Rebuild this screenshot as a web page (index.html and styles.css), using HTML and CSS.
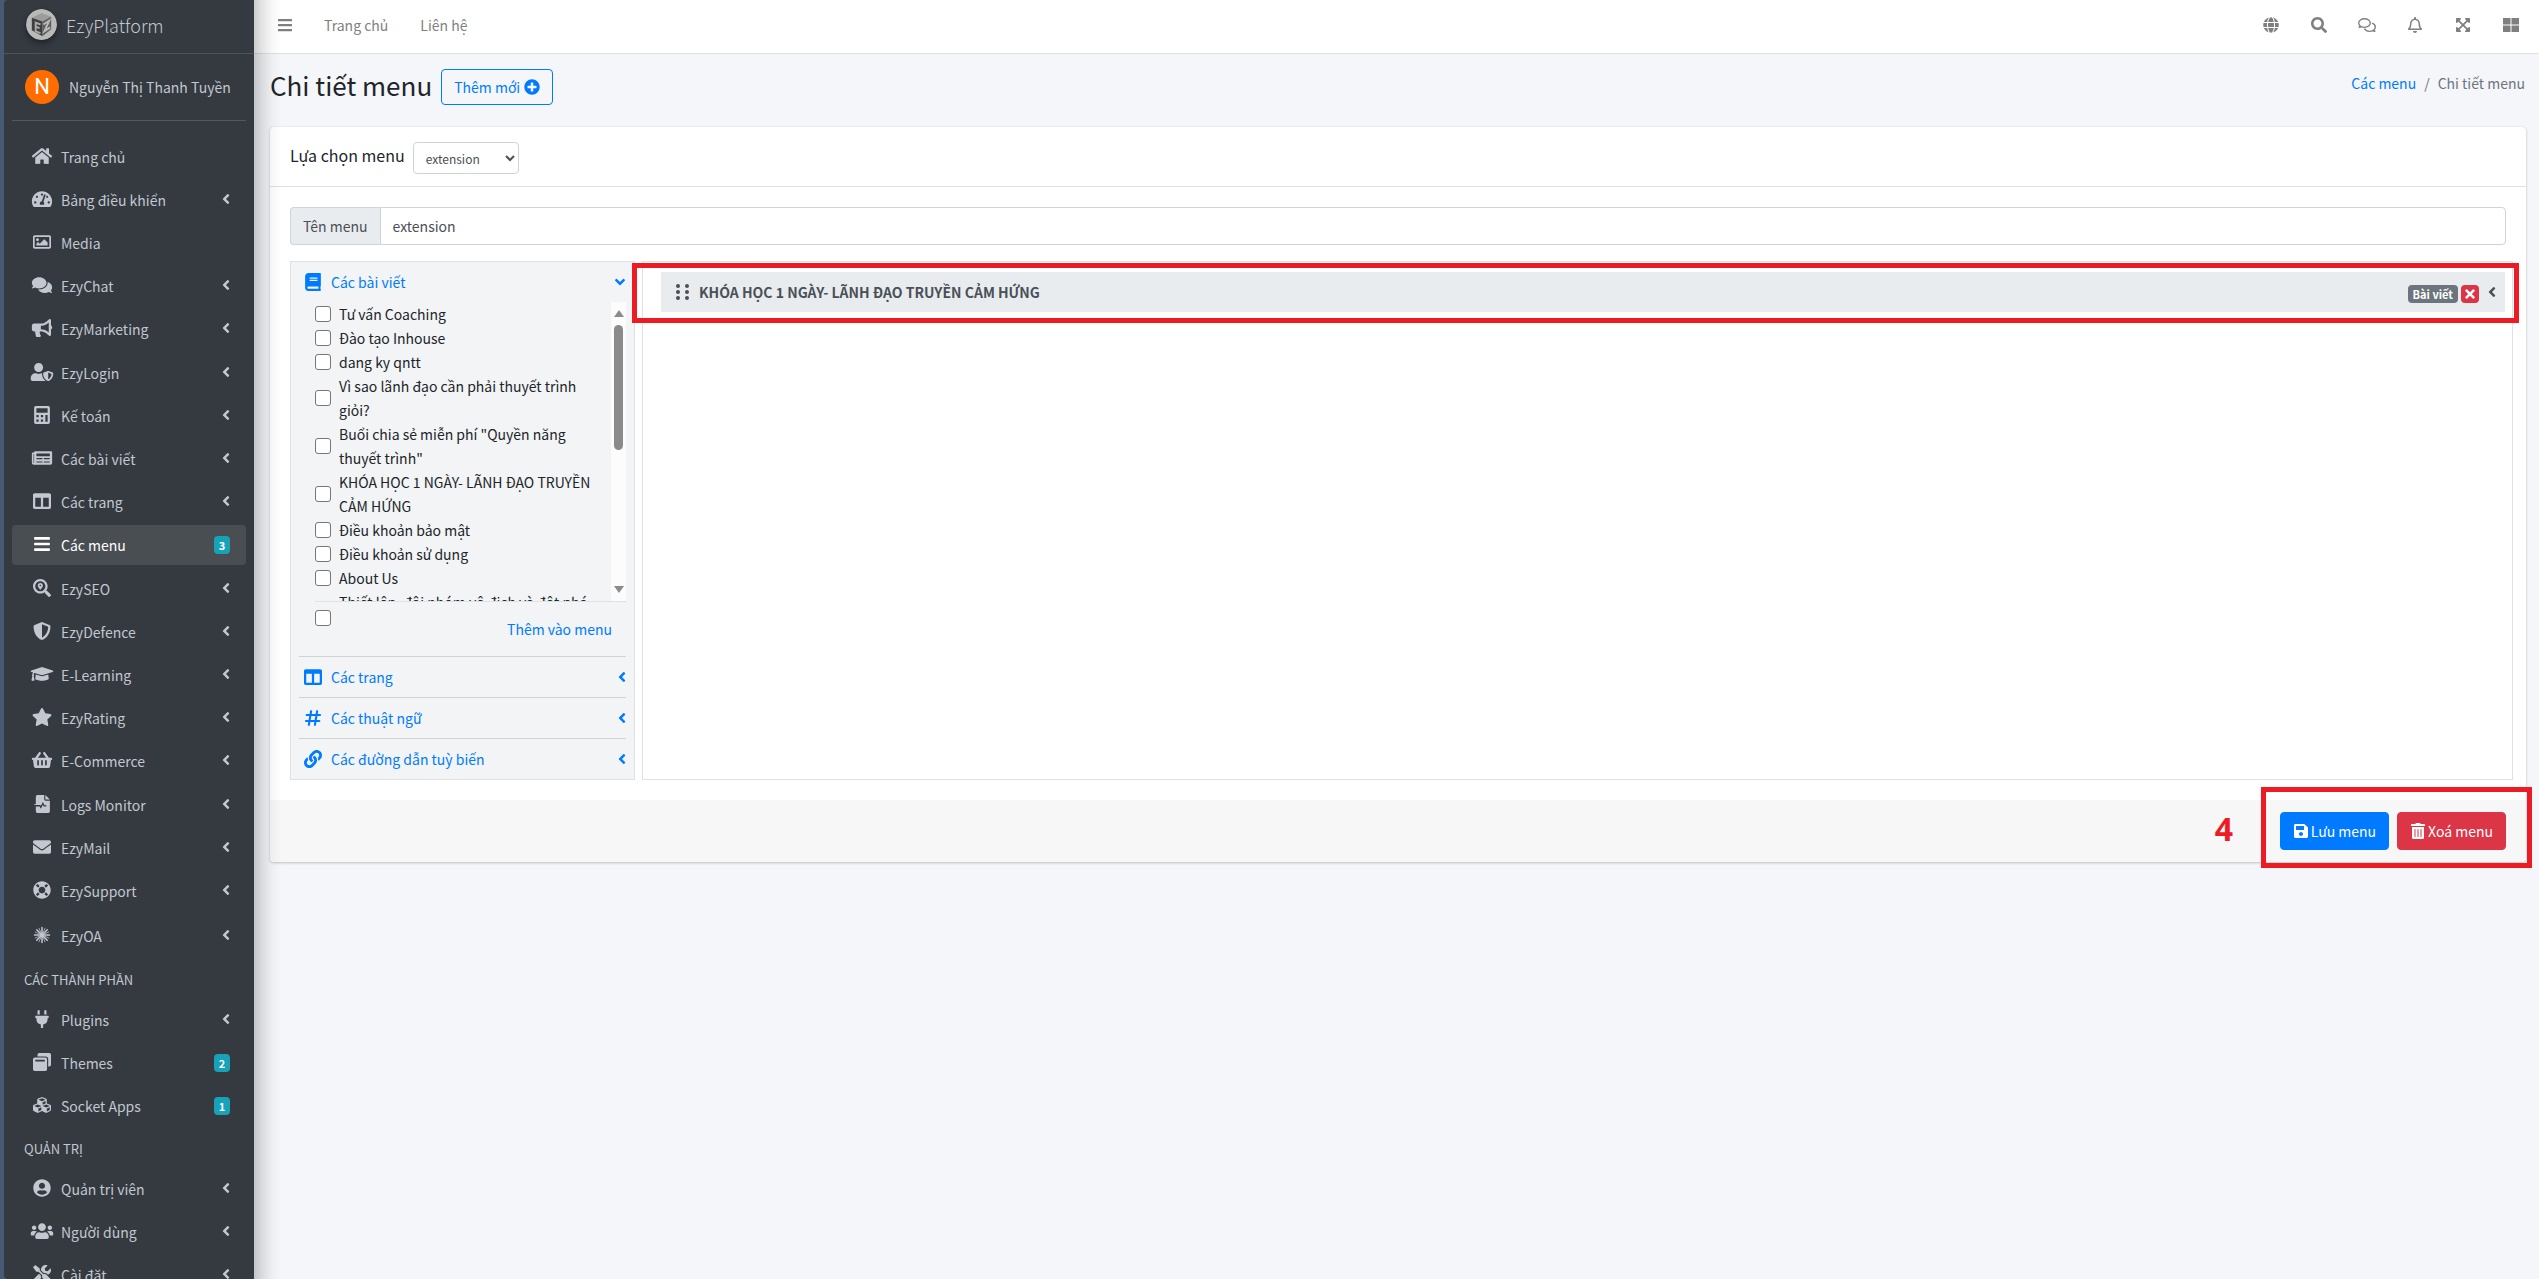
FILE: index.html
```html
<!DOCTYPE html>
<html lang="vi">
<head>
<meta charset="utf-8">
<meta name="viewport" content="width=device-width, initial-scale=1">
<title>EzyPlatform - Chi tiết menu</title>
<link rel="stylesheet" href="styles.css">
</head>
<body>
<svg class="sprite" aria-hidden="true">
<symbol id="i-home" viewBox="0 0 576 512"><path d="M280.37 148.26L96 300.11V464a16 16 0 0 0 16 16l112.06-.29a16 16 0 0 0 15.92-16V368a16 16 0 0 1 16-16h64a16 16 0 0 1 16 16v95.64a16 16 0 0 0 16 16.05L464 480a16 16 0 0 0 16-16V300L295.67 148.26a12.19 12.19 0 0 0-15.3 0zM571.6 251.47L488 182.56V44.05a12 12 0 0 0-12-12h-56a12 12 0 0 0-12 12v72.61L318.47 43a48 48 0 0 0-61 0L4.34 251.47a12 12 0 0 0-1.6 16.9l25.5 31A12 12 0 0 0 45.15 301l235.22-193.74a12.19 12.19 0 0 1 15.3 0L530.9 301a12 12 0 0 0 16.9-1.6l25.5-31a12 12 0 0 0-1.7-16.93z"/></symbol>
<symbol id="i-dashboard" viewBox="0 0 576 512"><path d="M288 32C128.94 32 0 160.94 0 320c0 52.8 14.25 102.26 39.06 144.8 5.61 9.62 16.3 15.2 27.44 15.2h443c11.14 0 21.83-5.58 27.44-15.2C561.75 422.26 576 372.8 576 320c0-159.06-128.94-288-288-288zm0 64c14.71 0 26.58 10.13 30.32 23.65-1.11 2.26-2.64 4.23-3.45 6.67l-9.22 27.67c-5.13 3.49-10.97 6.01-17.64 6.01-17.67 0-32-14.33-32-32S270.33 96 288 96zM96 384c-17.67 0-32-14.33-32-32s14.33-32 32-32 32 14.33 32 32-14.33 32-32 32zm48-160c-17.67 0-32-14.33-32-32s14.33-32 32-32 32 14.33 32 32-14.33 32-32 32zm246.77-72.41l-61.33 184C343.13 347.33 352 364.54 352 384c0 11.72-3.38 22.55-8.88 32H232.88c-5.5-9.45-8.88-20.28-8.88-32 0-33.94 26.5-61.43 59.9-63.59l61.34-184.01c4.17-12.56 17.73-19.45 30.36-15.17 12.57 4.19 19.35 17.79 15.17 30.36zm14.66 57.2l15.52-46.55c3.47-1.29 7.13-2.23 11.05-2.23 17.67 0 32 14.33 32 32s-14.33 32-32 32c-11.38-.01-20.89-6.28-26.57-15.22zM480 384c-17.67 0-32-14.33-32-32s14.33-32 32-32 32 14.33 32 32-14.33 32-32 32z"/></symbol>
<symbol id="i-image" viewBox="0 0 512 512"><path d="M464 64H48C21.49 64 0 85.49 0 112v288c0 26.51 21.49 48 48 48h416c26.51 0 48-21.49 48-48V112c0-26.51-21.49-48-48-48zm-6 336H54a6 6 0 0 1-6-6V118a6 6 0 0 1 6-6h404a6 6 0 0 1 6 6v276a6 6 0 0 1-6 6zM128 152c-22.091 0-40 17.909-40 40s17.909 40 40 40 40-17.909 40-40-17.909-40-40-40zM96 352h320v-80l-87.515-87.515c-4.686-4.686-12.284-4.686-16.971 0L192 304l-39.515-39.515c-4.686-4.686-12.284-4.686-16.971 0L96 304v48z"/></symbol>
<symbol id="i-comments" viewBox="0 0 576 512"><path d="M416 192c0-88.4-93.1-160-208-160S0 103.6 0 192c0 34.3 14.1 65.9 38 92-13.4 30.2-35.5 54.2-35.8 54.5-2.2 2.3-2.8 5.7-1.5 8.7S4.8 352 8 352c36.6 0 66.9-12.3 88.7-25 32.2 15.7 70.3 25 111.3 25 114.9 0 208-71.6 208-160zm122 220c23.9-26 38-57.7 38-92 0-66.9-53.5-124.2-129.3-148.1.9 6.6 1.3 13.3 1.3 20.1 0 105.9-107.7 192-240 192-10.8 0-21.3-.8-31.7-1.9C207.8 439.6 281.8 480 368 480c41 0 79.1-9.2 111.3-25 21.8 12.7 52.1 25 88.7 25 3.2 0 6.1-1.9 7.3-4.8 1.3-2.9.7-6.3-1.5-8.7-.3-.3-22.4-24.2-35.8-54.5z"/></symbol>
<symbol id="i-bullhorn" viewBox="0 0 576 512"><path d="M576 240c0-23.63-12.95-44.04-32-55.12V32.01C544 23.26 537.02 0 512 0c-7.12 0-14.19 2.38-19.98 7.02l-85.03 68.03C364.28 109.19 310.66 128 256 128H64c-35.35 0-64 28.65-64 64v96c0 35.35 28.65 64 64 64h33.7c-1.39 10.48-2.18 21.14-2.18 32 0 39.77 9.26 77.35 25.56 110.94 5.19 10.69 16.52 17.06 28.4 17.06h74.28c26.05 0 41.69-29.84 25.9-50.56-16.4-21.52-26.15-48.36-26.15-77.44 0-11.11 1.62-21.79 4.41-32H256c54.66 0 108.28 18.81 150.98 52.95l85.03 68.03a32.023 32.023 0 0 0 19.98 7.02c24.92 0 32-22.78 32-32V295.13C563.05 284.04 576 263.63 576 240zm-96 141.42l-33.05-26.44C392.95 311.78 325.12 288 256 288v-96c69.12 0 136.95-23.78 190.95-66.98L480 98.58v282.84z"/></symbol>
<symbol id="i-user-shield" viewBox="0 0 640 512"><path d="M622.3 271.1l-115.2-45c-4.1-1.6-12.6-3.7-22.2 0l-115.2 45c-10.7 4.2-17.7 14-17.7 24.9 0 111.6 68.7 188.8 132.9 213.9 9.6 3.7 18 1.6 22.2 0C558.4 489.9 640 420.5 640 296c0-10.9-7-20.7-17.7-24.9zM496 462.4V273.3l95.5 37.3c-5.6 87.1-60.9 135.4-95.5 151.8zM224 256c70.7 0 128-57.3 128-128S294.7 0 224 0 96 57.3 96 128s57.3 128 128 128zm96 40c0-2.5.8-4.8 1.1-7.2-2.5-.1-4.9-.8-7.5-.8h-16.7c-22.2 10.2-46.9 16-72.9 16s-50.6-5.8-72.9-16h-16.7C60.2 288 0 348.2 0 422.4V464c0 26.5 21.5 48 48 48h352c6.8 0 13.3-1.5 19.2-4-54-42.9-99.2-116.7-99.2-212z"/></symbol>
<symbol id="i-calculator" viewBox="0 0 448 512"><path fill-rule="evenodd" d="M400 0H48C22.4 0 0 22.4 0 48v416c0 25.600 22.400 48 48 48h352c25.600 0 48-22.400 48-48V48c0-25.600-22.400-48-48-48zM64 64h320v128H64zM64 256h64v64H64zM192 256h64v64h-64zM320 256h64v192h-64zM64 384h64v64H64zM192 384h64v64h-64z"/></symbol>
<symbol id="i-news" viewBox="0 0 576 512"><path fill-rule="evenodd" d="M552 64H88c-13.255 0-24 10.745-24 24v8H24c-13.255 0-24 10.745-24 24v272c0 30.928 25.072 56 56 56h472c26.510 0 48-21.490 48-48V88c0-13.255-10.745-24-24-24zM56 400a8 8 0 0 1-8-8V144h16v248a8 8 0 0 1-8 8zM140 128h360q12 0 12 12v56q0 12-12 12H140q-12 0-12-12v-56q0-12 12-12zM140 256h152q12 0 12 12v8q0 12-12 12H140q-12 0-12-12v-8q0-12 12-12zM348 256h152q12 0 12 12v8q0 12-12 12H348q-12 0-12-12v-8q0-12 12-12zM140 352h152q12 0 12 12v8q0 12-12 12H140q-12 0-12-12v-8q0-12 12-12zM348 352h152q12 0 12 12v8q0 12-12 12H348q-12 0-12-12v-8q0-12 12-12z"/></symbol>
<symbol id="i-columns" viewBox="0 0 512 512"><path d="M464 32H48C21.49 32 0 53.49 0 80v352c0 26.51 21.49 48 48 48h416c26.51 0 48-21.49 48-48V80c0-26.51-21.49-48-48-48zM224 416H64V160h160v256zm224 0H288V160h160v256z"/></symbol>
<symbol id="i-bars" viewBox="0 0 448 512"><path d="M16 60h416q16 0 16 16v40q0 16-16 16H16q-16 0-16-16V76q0-16 16-16zM16 220h416q16 0 16 16v40q0 16-16 16H16q-16 0-16-16v-40q0-16 16-16zM16 380h416q16 0 16 16v40q0 16-16 16H16q-16 0-16-16v-40q0-16 16-16z"/></symbol>
<symbol id="i-search-location" viewBox="0 0 512 512"><path d="M505.04 442.66l-99.71-99.69c-4.5-4.5-10.6-7-17-7h-16.3c27.6-35.3 44-79.69 44-127.99C416.03 93.09 322.92 0 208.02 0S0 93.09 0 207.98s93.11 207.98 208.02 207.98c48.3 0 92.71-16.4 128.01-44v16.3c0 6.4 2.5 12.5 7 17l99.71 99.69c9.4 9.4 24.6 9.4 33.9 0l28.3-28.3c9.4-9.4 9.4-24.59.1-33.99zm-297.02-90.7c-79.54 0-144-64.34-144-143.98 0-79.53 64.35-143.98 144-143.98 79.54 0 144 64.34 144 143.98 0 79.53-64.35 143.98-144 143.98zm.02-239.96c-40.78 0-73.84 33.05-73.84 73.83 0 32.96 48.26 93.05 66.75 114.86a9.24 9.24 0 0 0 14.18 0c18.49-21.81 66.75-81.89 66.75-114.86 0-40.78-33.06-73.83-73.84-73.83zm0 96c-13.26 0-24-10.75-24-24 0-13.26 10.75-24 24-24s24 10.74 24 24c0 13.25-10.75 24-24 24z"/></symbol>
<symbol id="i-search" viewBox="0 0 512 512"><path d="M505 442.7L405.3 343c-4.5-4.5-10.6-7-17-7H372c27.6-35.3 44-79.7 44-128C416 93.1 322.9 0 208 0S0 93.1 0 208s93.1 208 208 208c48.3 0 92.7-16.4 128-44v16.3c0 6.4 2.5 12.5 7 17l99.7 99.7c9.4 9.4 24.6 9.4 33.9 0l28.3-28.3c9.4-9.4 9.4-24.6.1-34zM208 336c-70.7 0-128-57.2-128-128 0-70.7 57.2-128 128-128 70.7 0 128 57.2 128 128 0 70.7-57.2 128-128 128z"/></symbol>
<symbol id="i-shield" viewBox="0 0 512 512"><path d="M466.5 83.7l-192-80a48.15 48.15 0 0 0-36.9 0l-192 80C27.7 91.1 16 108.6 16 128c0 198.5 114.5 335.7 221.5 380.3 11.8 4.9 25.1 4.9 36.9 0C360.1 472.6 496 349.3 496 128c0-19.4-11.7-36.9-29.5-44.3zM256.1 446.3l-.1-381 175.9 73.3c-3.3 151.4-82.1 261.1-175.8 307.7z"/></symbol>
<symbol id="i-graduation" viewBox="0 0 640 512"><path d="M622.34 153.2L343.4 67.5c-15.2-4.67-31.6-4.67-46.79 0L17.66 153.2c-23.54 7.23-23.54 38.36 0 45.59l48.63 14.94c-10.67 13.19-17.23 29.28-17.88 46.9C38.78 266.15 32 276.11 32 288c0 10.78 5.68 19.85 13.86 25.65L20.33 428.53C18.11 438.52 25.71 448 35.94 448h56.11c10.24 0 17.84-9.48 15.62-19.47L82.14 313.65C90.32 307.85 96 298.78 96 288c0-11.57-6.47-21.25-15.66-26.87.76-15.02 8.44-28.3 20.69-36.72L296.6 284.5c9.06 2.78 26.44 6.25 46.79 0l278.95-85.7c23.55-7.24 23.55-38.36 0-45.6zM352.79 315.09c-28.53 8.76-52.84 3.92-65.59 0l-145.02-44.55L128 384c0 35.35 85.96 64 192 64s192-28.65 192-64l-14.18-113.47-145.03 44.56z"/></symbol>
<symbol id="i-star" viewBox="0 0 576 512"><path d="M259.3 17.8L194 150.2 47.9 171.5c-26.2 3.8-36.7 36.1-17.7 54.6l105.7 103-25 145.5c-4.5 26.3 23.2 46 46.4 33.7L288 439.6l130.7 68.7c23.2 12.2 50.9-7.4 46.4-33.7l-25-145.5 105.7-103c19-18.5 8.5-50.8-17.7-54.6L382 150.2 316.7 17.8c-11.700-23.600-45.600-23.900-57.400 0z"/></symbol>
<symbol id="i-basket" viewBox="0 0 576 512"><path d="M576 216v16c0 13.255-10.745 24-24 24h-8l-26.113 182.788C514.509 462.435 494.257 480 470.37 480H105.63c-23.887 0-44.139-17.565-47.518-41.212L32 256h-8c-13.255 0-24-10.745-24-24v-16c0-13.255 10.745-24 24-24h67.341l106.78-146.821c10.395-14.292 30.407-17.453 44.701-7.058 14.293 10.395 17.453 30.408 7.058 44.701L170.477 192h235.046L326.12 82.821c-10.395-14.292-7.234-34.306 7.059-44.701 14.291-10.395 34.306-7.235 44.701 7.058L484.659 192H552c13.255 0 24 10.745 24 24zM312 392V280c0-13.255-10.745-24-24-24s-24 10.745-24 24v112c0 13.255 10.745 24 24 24s24-10.745 24-24zm112 0V280c0-13.255-10.745-24-24-24s-24 10.745-24 24v112c0 13.255 10.745 24 24 24s24-10.745 24-24zm-224 0V280c0-13.255-10.745-24-24-24s-24 10.745-24 24v112c0 13.255 10.745 24 24 24s24-10.745 24-24z"/></symbol>
<symbol id="i-file-wave" viewBox="0 0 448 512"><path fill-rule="evenodd" d="M96 0h192v128q0 32 32 32h128v304q0 48-48 48H96q-48 0-48-48V324h110l34 66 56-112 26 46h74v-36h-52l-48-86-56 112-16-30H0v-24h48V48Q48 0 96 0zM320 0l128 128H320z"/></symbol>
<symbol id="i-envelope" viewBox="0 0 512 512"><path d="M502.3 190.8c3.9-3.1 9.7-.2 9.7 4.7V400c0 26.5-21.5 48-48 48H48c-26.5 0-48-21.5-48-48V195.6c0-5 5.7-7.8 9.700-4.700 22.400 17.400 52.100 39.500 154.100 113.600 21.100 15.400 56.700 47.800 92.200 47.600 35.700.3 72-32.800 92.300-47.600 102-74.100 131.600-96.300 154-113.700zM256 320c23.200.4 56.600-29.200 73.400-41.400 132.700-96.300 142.800-104.700 173.400-128.700 5.800-4.500 9.200-11.500 9.200-18.900v-19c0-26.500-21.500-48-48-48H48c-26.500 0-48 21.500-48 48v19c0 7.400 3.400 14.300 9.200 18.900 30.600 23.900 40.700 32.400 173.400 128.700 16.800 12.200 50.200 41.800 73.400 41.400z"/></symbol>
<symbol id="i-life-ring" viewBox="0 0 512 512"><path d="M256 8C119.033 8 8 119.033 8 256s111.033 248 248 248 248-111.033 248-248S392.967 8 256 8zm173.696 119.559l-63.399 63.399c-10.987-18.559-26.67-34.252-45.255-45.255l63.399-63.399a218.396 218.396 0 0 1 45.255 45.255zM256 352c-53.019 0-96-42.981-96-96s42.981-96 96-96 96 42.981 96 96-42.981 96-96 96zM127.559 82.304l63.399 63.399c-18.559 10.987-34.252 26.67-45.255 45.255l-63.399-63.399a218.372 218.372 0 0 1 45.255-45.255zM82.304 384.441l63.399-63.399c10.987 18.559 26.67 34.252 45.255 45.255l-63.399 63.399a218.396 218.396 0 0 1-45.255-45.255zm302.137 45.255l-63.399-63.399c18.559-10.987 34.252-26.67 45.255-45.255l63.399 63.399a218.403 218.403 0 0 1-45.255 45.255z"/></symbol>
<symbol id="i-burst" viewBox="0 0 24 24"><g stroke="currentColor" stroke-width="2" stroke-linecap="round"><path d="M12 2v20M2 12h20M5 5l14 14M19 5L5 19"/></g><g stroke="currentColor" stroke-width="1" stroke-linecap="round"><path d="M8 3l8 18M16 3L8 21M3 8l18 8M21 8L3 16"/></g></symbol>
<symbol id="i-plug" viewBox="0 0 384 512"><path d="M320,32a32,32,0,0,0-64,0v96h64Zm48,128H16A16,16,0,0,0,0,176v32a16,16,0,0,0,16,16H32v32A160.07,160.07,0,0,0,160,412.8V512h64V412.8A160.07,160.07,0,0,0,352,256V224h16a16,16,0,0,0,16-16V176A16,16,0,0,0,368,160ZM128,32a32,32,0,0,0-64,0v96h64Z"/></symbol>
<symbol id="i-windows" viewBox="0 0 512 512"><path fill-rule="evenodd" d="M48 128h304q48 0 48 48v288q0 48-48 48H48q-48 0-48-48V176q0-48 48-48zM80 192q-16 0-16 16v16q0 16 16 16h240q16 0 16-16v-16q0-16-16-16zM128 96V48q0-48 48-48h288q48 0 48 48v288q0 48-48 48h-32V176q0-80-80-80z"/></symbol>
<symbol id="i-cubes" viewBox="0 0 512 512"><path d="M488.6 250.2L392 214V105.5c0-15-9.3-28.4-23.4-33.7l-100-37.5c-8.1-3.1-17.1-3.1-25.3 0l-100 37.5c-14.1 5.3-23.4 18.7-23.4 33.7V214l-96.6 36.2C9.3 255.5 0 268.9 0 283.9V394c0 13.6 7.7 26.1 19.9 32.2l100 50c10.1 5.1 22.1 5.1 32.2 0l103.900-52 103.900 52c10.100 5.100 22.100 5.100 32.200 0l100-50c12.200-6.100 19.900-18.600 19.900-32.200V283.900c0-15-9.300-28.400-23.400-33.700zM358 214.800l-85 31.900v-68.200l85-37v73.300zM154 104.100l102-38.200 102 38.200v.6l-102 41.400-102-41.400v-.6zm84 291.100l-85 42.500v-79.100l85-38.800v75.400zm0-112l-102 41.400-102-41.400v-.6l102-38.200 102 38.200v.6zm240 112l-85 42.500v-79.100l85-38.800v75.400zm0-112l-102 41.400-102-41.400v-.6l102-38.200 102 38.200v.6z"/></symbol>
<symbol id="i-user-circle" viewBox="0 0 496 512"><path d="M248 8C111 8 0 119 0 256s111 248 248 248 248-111 248-248S385 8 248 8zm0 96c48.6 0 88 39.4 88 88s-39.4 88-88 88-88-39.4-88-88 39.4-88 88-88zm0 344c-58.7 0-111.3-26.6-146.5-68.2 18.8-35.4 55.6-59.8 98.5-59.8 2.4 0 4.8.4 7.1 1.1 13 4.2 26.6 6.9 40.9 6.9 14.3 0 28-2.7 40.9-6.9 2.3-.7 4.7-1.1 7.1-1.1 42.9 0 79.7 24.4 98.5 59.8C359.3 421.4 306.7 448 248 448z"/></symbol>
<symbol id="i-users" viewBox="0 0 640 512"><path d="M96 224c35.3 0 64-28.7 64-64s-28.7-64-64-64-64 28.7-64 64 28.7 64 64 64zm448 0c35.3 0 64-28.7 64-64s-28.7-64-64-64-64 28.7-64 64 28.7 64 64 64zm32 32h-64c-17.6 0-33.5 7.1-45.1 18.6 40.3 22.1 68.9 62 75.1 109.4h66c17.7 0 32-14.3 32-32v-32c0-35.3-28.7-64-64-64zm-256 0c61.9 0 112-50.1 112-112S381.9 32 320 32 208 82.1 208 144s50.1 112 112 112zm76.8 32h-8.3c-20.8 10-43.9 16-68.5 16s-47.6-6-68.5-16h-8.3C179.6 288 128 339.6 128 403.2V432c0 26.5 21.5 48 48 48h288c26.5 0 48-21.5 48-48v-28.8c0-63.6-51.6-115.2-115.2-115.2zm-223.7-13.4C161.5 263.1 145.6 256 128 256H64c-35.3 0-64 28.7-64 64v32c0 17.7 14.3 32 32 32h65.9c6.3-47.4 34.9-87.3 75.2-109.4z"/></symbol>
<symbol id="i-tools" viewBox="0 0 512 512"><path d="M501.1 395.7L384 278.6c-23.1-23.1-57.6-27.6-85.4-13.9L192 158.1V96L64 0 0 64l96 128h62.1l106.6 106.6c-13.6 27.8-9.2 62.3 13.9 85.4l117.1 117.1c14.6 14.6 38.2 14.6 52.7 0l52.7-52.7c14.5-14.6 14.5-38.2 0-52.7zM331.7 225c28.3 0 54.9 11 74.9 31l19.4 19.4c15.8-6.9 30.8-16.5 43.8-29.5 37.1-37.1 49.7-89.3 37.9-136.7-2.2-9-13.5-12.1-20.1-5.5l-74.4 74.4-67.9-11.3L334 98.900l74.400-74.400c6.600-6.600 3.400-17.900-5.700-20.200-47.400-11.700-99.600.9-136.600 37.900-28.500 28.500-41.900 66.100-41.200 103.600l82.100 82.100c8.100-1.900 16.500-2.900 24.700-2.900zm-103.900 82l-56.700-56.700L18.700 402.800c-25 25-25 65.500 0 90.500s65.500 25 90.500 0l123.600-123.600c-7.600-19.900-9.900-41.600-5-62.700zM64 472c-13.200 0-24-10.800-24-24 0-13.300 10.700-24 24-24s24 10.700 24 24c0 13.200-10.700 24-24 24z"/></symbol>
<symbol id="i-angle" viewBox="0 0 256 512"><path d="M31.7 239l136-136c9.4-9.4 24.6-9.4 33.9 0l22.6 22.6c9.4 9.4 9.4 24.6 0 33.9L127.9 256l96.4 96.4c9.4 9.4 9.4 24.6 0 33.9L201.7 409c-9.4 9.4-24.6 9.4-33.9 0l-136-136c-9.5-9.4-9.5-24.6-.1-34z"/></symbol>
<symbol id="i-book" viewBox="0 0 448 512"><path d="M448 360V24c0-13.3-10.7-24-24-24H96C43 0 0 43 0 96v320c0 53 43 96 96 96h328c13.3 0 24-10.7 24-24v-16c0-7.5-3.5-14.3-8.9-18.7-4.2-15.4-4.2-59.3 0-74.7 5.4-4.3 8.9-11.1 8.9-18.6zM128 134c0-3.3 2.7-6 6-6h212c3.3 0 6 2.700 6 6v20c0 3.300-2.700 6-6 6H134c-3.300 0-6-2.700-6-6v-20zm0 64c0-3.300 2.700-6 6-6h212c3.300 0 6 2.700 6 6v20c0 3.300-2.700 6-6 6H134c-3.300 0-6-2.700-6-6v-20zm253.400 250H96c-17.700 0-32-14.300-32-32 0-17.600 14.400-32 32-32h285.400c-1.900 17.100-1.900 46.900 0 64z"/></symbol>
<symbol id="i-hash" viewBox="0 0 448 512"><path fill="none" stroke="currentColor" stroke-width="60" stroke-linecap="round" d="M170 62l-64 388M342 62l-64 388M44 172h380M24 340h380"/></symbol>
<symbol id="i-link" viewBox="0 0 512 512"><path d="M326.612 185.391c59.747 59.809 58.927 155.698.36 214.59-.11.12-.24.25-.36.37l-67.2 67.2c-59.27 59.27-155.699 59.262-214.96 0-59.27-59.26-59.27-155.7 0-214.96l37.106-37.106c9.84-9.84 26.786-3.3 27.294 10.606.648 17.722 3.826 35.527 9.69 52.721 1.986 5.822.567 12.262-3.783 16.612l-13.087 13.087c-28.026 28.026-28.905 73.66-1.155 101.96 28.024 28.579 74.086 28.749 102.325.51l67.2-67.19c28.191-28.191 28.073-73.757 0-101.83-3.701-3.694-7.429-6.564-10.341-8.569a16.037 16.037 0 0 1-6.947-12.606c-.396-10.567 3.348-21.456 11.698-29.806l21.054-21.055c5.521-5.521 14.182-6.199 20.584-1.731a152.482 152.482 0 0 1 20.522 17.197zM467.547 44.449c-59.261-59.262-155.69-59.27-214.96 0l-67.2 67.2c-.12.12-.25.25-.36.37-58.566 58.892-59.387 154.781.36 214.59a152.454 152.454 0 0 0 20.521 17.196c6.402 4.468 15.064 3.789 20.584-1.731l21.054-21.055c8.35-8.35 12.094-19.239 11.698-29.806a16.037 16.037 0 0 0-6.947-12.606c-2.912-2.005-6.64-4.875-10.341-8.569-28.073-28.073-28.191-73.639 0-101.83l67.2-67.19c28.239-28.239 74.3-28.069 102.325.51 27.75 28.3 26.872 73.934-1.155 101.96l-13.087 13.087c-4.35 4.35-5.769 10.79-3.783 16.612 5.864 17.194 9.042 34.999 9.69 52.721.509 13.906 17.454 20.446 27.294 10.606l37.106-37.106c59.271-59.259 59.271-155.699.001-214.959z"/></symbol>
<symbol id="i-plus-circle" viewBox="0 0 512 512"><path fill-rule="evenodd" d="M256 8a248 248 0 1 0 0 496a248 248 0 1 0 0-496zM228 112h56q12 0 12 12v92h92q12 0 12 12v56q0 12-12 12h-92v92q0 12-12 12h-56q-12 0-12-12v-92h-92q-12 0-12-12v-56q0-12 12-12h92v-92q0-12 12-12z"/></symbol>
<symbol id="i-save" viewBox="0 0 448 512"><path d="M433.941 129.941l-83.882-83.882A48 48 0 0 0 316.118 32H48C21.490 32 0 53.490 0 80v352c0 26.510 21.490 48 48 48h352c26.510 0 48-21.490 48-48V163.882a48 48 0 0 0-14.059-33.941zM224 416c-35.346 0-64-28.654-64-64 0-35.346 28.654-64 64-64s64 28.654 64 64c0 35.346-28.654 64-64 64zm96-304.520V212c0 6.627-5.373 12-12 12H76c-6.627 0-12-5.373-12-12V108c0-6.627 5.373-12 12-12h228.520c3.183 0 6.235 1.264 8.485 3.515l3.480 3.480A11.996 11.996 0 0 1 320 111.480z"/></symbol>
<symbol id="i-trash" viewBox="0 0 448 512"><path d="M32 464a48 48 0 0 0 48 48h288a48 48 0 0 0 48-48V128H32zm272-256a16 16 0 0 1 32 0v224a16 16 0 0 1-32 0zm-96 0a16 16 0 0 1 32 0v224a16 16 0 0 1-32 0zm-96 0a16 16 0 0 1 32 0v224a16 16 0 0 1-32 0zM432 32H312l-9.400-18.700A24 24 0 0 0 281.100 0H166.800a23.720 23.720 0 0 0-21.400 13.300L136 32H16A16 16 0 0 0 0 48v32a16 16 0 0 0 16 16h416a16 16 0 0 0 16-16V48a16 16 0 0 0-16-16z"/></symbol>
<symbol id="i-times" viewBox="0 0 352 512"><path d="M242.72 256l100.07-100.07c12.28-12.28 12.28-32.19 0-44.48l-22.24-22.24c-12.28-12.28-32.19-12.28-44.48 0L176 189.28 75.93 89.21c-12.28-12.28-32.19-12.28-44.48 0L9.21 111.45c-12.28 12.28-12.28 32.19 0 44.48L109.28 256 9.21 356.07c-12.28 12.28-12.28 32.19 0 44.48l22.24 22.24c12.28 12.28 32.2 12.28 44.48 0L176 322.72l100.07 100.07c12.28 12.28 32.2 12.28 44.48 0l22.24-22.24c12.28-12.28 12.28-32.19 0-44.48L242.72 256z"/></symbol>
<symbol id="i-globe" viewBox="0 0 496 512"><path d="M336.5 160C322 70.7 287.8 8 248 8s-74 62.7-88.5 152h177zM152 256c0 22.2 1.2 43.5 3.3 64h185.3c2.1-20.5 3.3-41.8 3.3-64s-1.2-43.5-3.3-64H155.3c-2.1 20.5-3.3 41.8-3.3 64zm324.7-96c-28.6-67.9-86.5-120.4-158-141.6 24.4 33.8 41.2 84.7 50 141.6h108zM177.2 18.4C105.8 39.6 47.8 92.1 19.3 160h108c8.7-56.9 25.5-107.8 49.9-141.6zM487.4 192H372.7c2.1 21 3.3 42.5 3.3 64s-1.2 43-3.3 64h114.6c5.5-20.5 8.6-41.8 8.6-64s-3.1-43.5-8.5-64zM120 256c0-21.5 1.2-43 3.3-64H8.6C3.2 212.5 0 233.8 0 256s3.2 43.5 8.6 64h114.6c-2-21-3.2-42.5-3.2-64zm39.5 96c14.5 89.3 48.7 152 88.5 152s74-62.7 88.5-152h-177zm159.3 141.6c71.4-21.2 129.4-73.7 158-141.6h-108c-8.8 56.9-25.6 107.8-50 141.6zM19.3 352c28.6 67.9 86.5 120.4 158 141.6-24.4-33.8-41.2-84.7-50-141.6h-108z"/></symbol>
<symbol id="i-comments-o" viewBox="0 0 576 512"><g fill="none" stroke="currentColor" stroke-width="44" stroke-linejoin="round"><path d="M208 54C105 54 22 116 22 192c0 36 18 68 46 92-8 18-20 34-32 46 26-2 48-12 66-24 31 16 67 24 106 24 103 0 186-62 186-138S311 54 208 54z"/><path d="M448 194c62 20 106 68 106 126 0 36-18 68-46 92 8 18 20 34 32 46-26-2-48-12-66-24-31 16-67 24-106 24-76 0-132-32-162-84"/></g></symbol>
<symbol id="i-bell" viewBox="0 0 448 512"><path d="M439.39 362.29c-19.32-20.76-55.47-51.99-55.47-154.29 0-77.7-54.48-139.9-127.94-155.16V32c0-17.67-14.32-32-31.98-32s-31.98 14.33-31.98 32v20.84C118.56 68.1 64.08 130.3 64.08 208c0 102.3-36.15 133.53-55.47 154.29-6 6.45-8.66 14.16-8.61 21.71.11 16.4 12.98 32 32.1 32h383.8c19.12 0 32-15.6 32.1-32 .05-7.55-2.61-15.27-8.61-21.71zM67.53 368c21.22-27.97 44.42-74.33 44.53-159.42 0-.2-.06-.38-.06-.58 0-61.86 50.14-112 112-112s112 50.14 112 112c0 .2-.06.38-.06.58.11 85.1 23.31 131.46 44.53 159.42H67.53zM224 512c35.32 0 63.97-28.65 63.97-64H160.03c0 35.35 28.65 64 63.97 64z"/></symbol>
<symbol id="i-expand" viewBox="0 0 448 512"><path d="M448 344v112a23.94 23.94 0 0 1-24 24H312c-21.39 0-32.09-25.9-17-41l36.2-36.2L224 295.6 116.77 402.9 153 439c15.09 15.1 4.39 41-17 41H24a23.94 23.94 0 0 1-24-24V344c0-21.4 25.89-32.1 41-17l36.19 36.2L184.46 256 77.18 148.7 41 185c-15.1 15.1-41 4.4-41-17V56a23.94 23.94 0 0 1 24-24h112c21.39 0 32.09 25.9 17 41l-36.2 36.2L224 216.4l107.23-107.3L295 73c-15.09-15.1-4.39-41 17-41h112a23.94 23.94 0 0 1 24 24v112c0 21.4-25.89 32.1-41 17l-36.19-36.2L263.54 256l107.28 107.3L407 327.1c15.1-15.2 41-4.5 41 16.9z"/></symbol>
<symbol id="i-grid" viewBox="0 0 512 512"><path d="M0 32h240v208H0zM272 32h240v208H272zM0 272h240v208H0zM272 272h240v208H272z"/></symbol>
<symbol id="i-grip" viewBox="0 0 16 16"><circle cx="3" cy="2" r="2"/><circle cx="3" cy="8" r="2"/><circle cx="3" cy="14" r="2"/><circle cx="12" cy="2" r="2"/><circle cx="12" cy="8" r="2"/><circle cx="12" cy="14" r="2"/></symbol>
</svg>

<aside class="sidebar">
  <a class="brand" href="#">
    <svg class="brand-logo" viewBox="0 0 32 32" aria-hidden="true">
      <circle cx="16" cy="16" r="16" fill="#b9b9b9"/>
      <path d="M16 4l10 4-9 5-11-4z" fill="#9c9c9c"/>
      <path d="M6 9l11 4v15l-11-6z" fill="#3f3f3f"/>
      <path d="M26 8l-9 5v15l9-7z" fill="#5f5f5f"/>
      <path d="M15 16l-5-2v9l5 2M10 18l4 2" fill="none" stroke="#a8a8a8" stroke-width="2"/>
      <path d="M18 16l6-4-5 11 6-4" fill="none" stroke="#b9b9b9" stroke-width="2"/>
    </svg>
    <span>EzyPlatform</span>
  </a>
  <a class="user" href="#"><span class="avatar">N</span><span>Nguyễn Thị Thanh Tuyền</span></a>
  <nav>
    <ul class="side-nav">
      <li><a href="#"><svg class="ico"><use href="#i-home"/></svg><span>Trang chủ</span></a></li>
      <li><a href="#"><svg class="ico"><use href="#i-dashboard"/></svg><span>Bảng điều khiển</span><svg class="angle"><use href="#i-angle"/></svg></a></li>
      <li><a href="#"><svg class="ico"><use href="#i-image"/></svg><span>Media</span></a></li>
      <li><a href="#"><svg class="ico"><use href="#i-comments"/></svg><span>EzyChat</span><svg class="angle"><use href="#i-angle"/></svg></a></li>
      <li><a href="#"><svg class="ico"><use href="#i-bullhorn"/></svg><span>EzyMarketing</span><svg class="angle"><use href="#i-angle"/></svg></a></li>
      <li><a href="#"><svg class="ico"><use href="#i-user-shield"/></svg><span>EzyLogin</span><svg class="angle"><use href="#i-angle"/></svg></a></li>
      <li><a href="#"><svg class="ico"><use href="#i-calculator"/></svg><span>Kế toán</span><svg class="angle"><use href="#i-angle"/></svg></a></li>
      <li><a href="#"><svg class="ico"><use href="#i-news"/></svg><span>Các bài viết</span><svg class="angle"><use href="#i-angle"/></svg></a></li>
      <li><a href="#"><svg class="ico"><use href="#i-columns"/></svg><span>Các trang</span><svg class="angle"><use href="#i-angle"/></svg></a></li>
      <li><a class="active" href="#"><svg class="ico"><use href="#i-bars"/></svg><span>Các menu</span><span class="badge info">3</span></a></li>
      <li><a href="#"><svg class="ico"><use href="#i-search-location"/></svg><span>EzySEO</span><svg class="angle"><use href="#i-angle"/></svg></a></li>
      <li><a href="#"><svg class="ico"><use href="#i-shield"/></svg><span>EzyDefence</span><svg class="angle"><use href="#i-angle"/></svg></a></li>
      <li><a href="#"><svg class="ico"><use href="#i-graduation"/></svg><span>E-Learning</span><svg class="angle"><use href="#i-angle"/></svg></a></li>
      <li><a href="#"><svg class="ico"><use href="#i-star"/></svg><span>EzyRating</span><svg class="angle"><use href="#i-angle"/></svg></a></li>
      <li><a href="#"><svg class="ico"><use href="#i-basket"/></svg><span>E-Commerce</span><svg class="angle"><use href="#i-angle"/></svg></a></li>
      <li><a href="#"><svg class="ico"><use href="#i-file-wave"/></svg><span>Logs Monitor</span><svg class="angle"><use href="#i-angle"/></svg></a></li>
      <li><a href="#"><svg class="ico"><use href="#i-envelope"/></svg><span>EzyMail</span><svg class="angle"><use href="#i-angle"/></svg></a></li>
      <li><a href="#"><svg class="ico"><use href="#i-life-ring"/></svg><span>EzySupport</span><svg class="angle"><use href="#i-angle"/></svg></a></li>
      <li><a class="tall" href="#"><svg class="ico"><use href="#i-burst"/></svg><span>EzyOA</span><svg class="angle"><use href="#i-angle"/></svg></a></li>
    </ul>
    <h2 class="nav-header">CÁC THÀNH PHẦN</h2>
    <ul class="side-nav">
      <li><a href="#"><svg class="ico"><use href="#i-plug"/></svg><span>Plugins</span><svg class="angle"><use href="#i-angle"/></svg></a></li>
      <li><a href="#"><svg class="ico"><use href="#i-windows"/></svg><span>Themes</span><span class="badge info">2</span></a></li>
      <li><a href="#"><svg class="ico"><use href="#i-cubes"/></svg><span>Socket Apps</span><span class="badge info">1</span></a></li>
    </ul>
    <h2 class="nav-header">QUẢN TRỊ</h2>
    <ul class="side-nav">
      <li><a href="#"><svg class="ico"><use href="#i-user-circle"/></svg><span>Quản trị viên</span><svg class="angle"><use href="#i-angle"/></svg></a></li>
      <li><a href="#"><svg class="ico"><use href="#i-users"/></svg><span>Người dùng</span><svg class="angle"><use href="#i-angle"/></svg></a></li>
      <li><a href="#"><svg class="ico"><use href="#i-tools"/></svg><span>Cài đặt</span><svg class="angle"><use href="#i-angle"/></svg></a></li>
    </ul>
  </nav>
</aside>

<div class="page">
  <header class="topbar">
    <button class="icon-btn" type="button" aria-label="Thu gọn"><svg class="ico"><use href="#i-bars"/></svg></button>
    <a href="#">Trang chủ</a>
    <a href="#">Liên hệ</a>
    <div class="tools">
      <button class="icon-btn" type="button" aria-label="Ngôn ngữ"><svg class="ico"><use href="#i-globe"/></svg></button>
      <button class="icon-btn" type="button" aria-label="Tìm kiếm"><svg class="ico"><use href="#i-search"/></svg></button>
      <button class="icon-btn" type="button" aria-label="Tin nhắn"><svg class="ico"><use href="#i-comments-o"/></svg></button>
      <button class="icon-btn" type="button" aria-label="Thông báo"><svg class="ico"><use href="#i-bell"/></svg></button>
      <button class="icon-btn" type="button" aria-label="Toàn màn hình"><svg class="ico"><use href="#i-expand"/></svg></button>
      <button class="icon-btn" type="button" aria-label="Tuỳ chỉnh"><svg class="ico"><use href="#i-grid"/></svg></button>
    </div>
  </header>

  <main>
    <div class="page-head">
      <h1>Chi tiết menu</h1>
      <button class="btn outline" type="button">Thêm mới<svg class="ico"><use href="#i-plus-circle"/></svg></button>
      <nav class="crumbs" aria-label="Breadcrumb"><a href="#">Các menu</a><span>/</span><span>Chi tiết menu</span></nav>
    </div>

    <section class="card">
      <div class="card-head">
        <label for="menu-select">Lựa chọn menu</label>
        <select id="menu-select"><option>extension</option></select>
      </div>
      <div class="card-body">
        <div class="input-group">
          <label for="menu-name">Tên menu</label>
          <input id="menu-name" type="text" value="extension">
        </div>
        <div class="columns">
          <div class="sources">
            <section class="source">
              <a class="source-head open" href="#"><svg class="ico"><use href="#i-book"/></svg><span>Các bài viết</span><svg class="angle"><use href="#i-angle"/></svg></a>
              <div class="picker">
                <div class="picker-list">
                  <ul>
                    <li><label><input type="checkbox"><span>Tư vấn Coaching</span></label></li>
                    <li><label><input type="checkbox"><span>Đào tạo Inhouse</span></label></li>
                    <li><label><input type="checkbox"><span>dang ky qntt</span></label></li>
                    <li><label><input type="checkbox"><span>Vì sao lãnh đạo cần phải thuyết trình giỏi?</span></label></li>
                    <li><label><input type="checkbox"><span>Buổi chia sẻ miễn phí "Quyền năng thuyết trình"</span></label></li>
                    <li><label><input type="checkbox"><span>KHÓA HỌC 1 NGÀY- LÃNH ĐẠO TRUYỀN CẢM HỨNG</span></label></li>
                    <li><label><input type="checkbox"><span>Điều khoản bảo mật</span></label></li>
                    <li><label><input type="checkbox"><span>Điều khoản sử dụng</span></label></li>
                    <li><label><input type="checkbox"><span>About Us</span></label></li>
                    <li><label><input type="checkbox"><span>Thiết lập, đội nhóm vô địch và đột phá doanh số</span></label></li>
                  </ul>
                  <div class="rail" aria-hidden="true"><i class="up"></i><i class="thumb"></i><i class="down"></i></div>
                </div>
                <div class="picker-foot">
                  <input type="checkbox" aria-label="Chọn tất cả">
                  <a href="#">Thêm vào menu</a>
                </div>
              </div>
            </section>
            <a class="source-head" href="#"><svg class="ico"><use href="#i-columns"/></svg><span>Các trang</span><svg class="angle"><use href="#i-angle"/></svg></a>
            <a class="source-head" href="#"><svg class="ico"><use href="#i-hash"/></svg><span>Các thuật ngữ</span><svg class="angle"><use href="#i-angle"/></svg></a>
            <a class="source-head" href="#"><svg class="ico"><use href="#i-link"/></svg><span>Các đường dẫn tuỳ biến</span><svg class="angle"><use href="#i-angle"/></svg></a>
          </div>
          <div class="canvas">
            <div class="menu-item">
              <svg class="grip"><use href="#i-grip"/></svg>
              <strong>KHÓA HỌC 1 NGÀY- LÃNH ĐẠO TRUYỀN CẢM HỨNG</strong>
              <span class="badge">Bài viết</span>
              <button class="badge danger" type="button" aria-label="Xoá"><svg><use href="#i-times"/></svg></button>
              <svg class="angle"><use href="#i-angle"/></svg>
            </div>
            <div class="mark mark-item"></div>
          </div>
        </div>
      </div>
      <div class="card-foot">
        <button class="btn primary" type="button"><svg class="ico"><use href="#i-save"/></svg>Lưu menu</button>
        <button class="btn danger" type="button"><svg class="ico"><use href="#i-trash"/></svg>Xoá menu</button>
        <div class="mark mark-actions"><span>4</span></div>
      </div>
    </section>
  </main>
</div>
</body>
</html>
```
FILE: styles.css
```css
* { box-sizing: border-box; }

body {
  margin: 0;
  padding-left: 4px;
  display: flex;
  min-height: 100vh;
  background: linear-gradient(to right, #465a73 0, #465a73 8px, #f4f6f9 8px);
  color: #212529;
  font: 14px/24px "Noto Sans CJK SC", "Noto Sans", sans-serif;
}

a { color: #007bff; text-decoration: none; }
h1, h2, ul { margin: 0; padding: 0; font-weight: 400; }
ul { list-style: none; }
button, input, select { font: inherit; color: inherit; margin: 0; }
button { cursor: pointer; }
svg { fill: currentColor; flex: none; }
.sprite { position: absolute; width: 0; height: 0; }
.ico { width: 18px; height: 16px; }
.angle { width: 8px; height: 16px; margin-left: auto; }

/* Sidebar */
.sidebar {
  position: sticky;
  top: 0;
  z-index: 2;
  flex: none;
  width: 250px;
  height: 100vh;
  overflow: hidden;
  background: #343a40;
  border-radius: 4px 0 0 4px;
  color: #c2c7d0;
}
.page { position: relative; flex: 1; min-width: 0; background: #f4f6f9; }
.page::before {
  content: "";
  position: absolute;
  inset: 0 auto 0 0;
  z-index: 2;
  width: 28px;
  pointer-events: none;
  background: linear-gradient(to right, rgba(0,0,0,.2), rgba(0,0,0,.11) 8px, rgba(0,0,0,.03) 18px, transparent);
}
.sidebar a { color: inherit; }
.brand {
  display: flex;
  align-items: center;
  gap: 9px;
  height: 54px;
  padding: 0 22px 4px;
  border-bottom: 1px solid #4b545c;
  font-size: 18px;
  font-weight: 300;
}
.brand-logo { width: 31px; height: 31px; border-radius: 50%; box-shadow: 0 3px 6px rgba(0,0,0,.4); }
.user {
  display: flex;
  align-items: center;
  gap: 10px;
  height: 67px;
  margin: 0 8px;
  padding-left: 13px;
  border-bottom: 1px solid #4f5962;
  white-space: nowrap;
}
.avatar {
  width: 34px;
  height: 34px;
  border-radius: 50%;
  background: #ff6d00;
  color: #fff;
  font: 22px/34px Roboto, sans-serif;
  text-align: center;
}
.sidebar nav { padding-top: 16px; }
.side-nav { padding: 0 8px; }
.side-nav li { margin-bottom: 3px; }
.side-nav li:nth-child(5n) { margin-bottom: 4px; }
.side-nav a {
  display: flex;
  align-items: center;
  height: 40px;
  padding: 0 16px 0 18px;
  border-radius: 4px;
}
.side-nav a.tall { height: 43px; }
.side-nav .ico { width: 24px; height: 18px; margin-right: 7px; }
.side-nav .ico, .side-nav .angle { margin-bottom: 2px; }
.side-nav a.active { background: #494e53; color: #fff; }
.nav-header { padding: 8px 20px; font-size: 13px; line-height: 24px; }
.badge {
  display: inline-flex;
  align-items: center;
  justify-content: center;
  height: 18px;
  padding: 0 5px;
  border: 0;
  border-radius: 4px;
  background: #6c757d;
  color: #fff;
  font-size: 11px;
  font-weight: 700;
  line-height: 18px;
}
.badge.info { width: 16px; margin-left: auto; background: #17a2b8; }
.badge.danger { width: 18px; padding: 0; background: #dc3545; }
.badge svg { width: 10px; height: 14px; }

/* Top bar */
.topbar {
  display: flex;
  align-items: center;
  height: 54px;
  padding: 0 16px 4px 8px;
  background: #fff;
  border-bottom: 1px solid #dee2e6;
  color: #7f7f7f;
}
.topbar > a { color: inherit; margin-left: 32px; }
.icon-btn { display: flex; justify-content: center; width: 48px; padding: 0; border: 0; background: none; }
.topbar > .icon-btn { width: 46px; margin-right: -16px; }
.tools { display: flex; margin-left: auto; margin-right: -12px; }

/* Page heading */
.page-head { display: flex; align-items: center; gap: 9px; height: 73px; padding: 0 14px 8px 16px; }
h1 { padding-bottom: 4px; font-size: 26px; line-height: 36px; }
.btn {
  display: inline-flex;
  align-items: center;
  justify-content: center;
  gap: 2px;
  height: 38px;
  padding: 0 12px;
  border: 1px solid;
  border-radius: 4px;
  white-space: nowrap;
}
.btn .ico { width: 16px; }
.btn.outline { gap: 4px; height: 36px; border-color: #007bff; background: none; color: #007bff; }
.btn.primary { border-color: #007bff; background: #007bff; color: #fff; }
.btn.danger { border-color: #dc3545; background: #dc3545; color: #fff; }
.crumbs { display: flex; gap: 8px; margin-left: auto; padding-bottom: 8px; color: #6c757d; }

/* Card */
.card {
  margin: 0 13px 0 16px;
  border-radius: 4px;
  background: #fff;
  box-shadow: 0 0 1px rgba(0,0,0,.13), 0 1px 3px rgba(0,0,0,.2);
}
.card-head {
  display: flex;
  align-items: center;
  gap: 8px;
  height: 60px;
  padding: 3px 20px 0;
  border-bottom: 1px solid #dfdfdf;
}
.card-head label { padding-bottom: 6px; font-size: 16px; }
select {
  width: 106px;
  height: 32px;
  padding: 0 8px;
  border: 1px solid #ced4da;
  border-radius: 4px;
  background: #fff;
  color: #495057;
  font-size: 12px;
}
.card-body { padding: 20px; }
.input-group { display: flex; height: 38px; color: #495057; }
.input-group label {
  padding: 6px 12px;
  border: 1px solid #ced4da;
  border-right: 0;
  border-radius: 4px 0 0 4px;
  background: #e9ecef;
}
.input-group input {
  flex: 1;
  min-width: 0;
  padding: 0 12px;
  border: 1px solid #ced4da;
  border-radius: 0 4px 4px 0;
  background: #fff;
}
.columns { display: flex; gap: 7px; margin: 16px -7px 0 0; }
.sources {
  flex: none;
  width: 345px;
  padding: 0 8px;
  border: 1px solid #dee2e6;
  background: #f2f4f6;
}
.source-head {
  display: flex;
  align-items: center;
  gap: 8px;
  height: 41px;
  padding: 0 0 0 4px;
  border-top: 1px solid #cfd2d6;
}
.source-head .ico { width: 20px; height: 18px; }
.source-head.open { height: 40px; border-top: 0; }
.open .angle { transform: rotate(-90deg); margin-right: 2px; }
.picker { padding-left: 16px; }
.picker-list { display: flex; height: 300px; overflow: hidden; border-bottom: 1px solid #dee2e6; }
.picker-list ul { flex: 1; min-width: 0; padding-right: 8px; }
.picker-list label { display: flex; align-items: center; gap: 8px; }
input[type="checkbox"] {
  appearance: none;
  flex: none;
  width: 16px;
  height: 16px;
  border: 1px solid #767676;
  border-radius: 3px;
  background: #fff;
}
.rail {
  display: flex;
  flex-direction: column;
  align-items: center;
  width: 15px;
  padding: 8px 0;
  background: #fcfcfc;
}
.rail i { border: 5px solid transparent; }
.rail .up { border-top: 0; border-bottom: 7px solid #8b8b8b; }
.rail .down { border-bottom: 0; border-top: 7px solid #8b8b8b; margin-top: auto; }
.rail .thumb { width: 9px; height: 125px; margin-top: 8px; border: 0; border-radius: 5px; background: #8b8b8b; }
.picker-foot { display: flex; justify-content: space-between; height: 54px; padding: 8px 14px 0 0; }
.picker-foot a { padding-top: 7px; }
.canvas { position: relative; flex: 1; min-width: 0; padding: 10px 7px 0 18px; border: 1px solid #dee2e6; }
.menu-item {
  display: flex;
  align-items: center;
  height: 40px;
  padding: 0 9px 0 14px;
  background: #e9ecef;
  color: #495057;
}
.grip { width: 16px; height: 16px; margin-right: 8px; }
.menu-item .badge { margin: 3px 0 0 auto; }
.menu-item .badge.danger { margin-left: 3px; }
.menu-item .angle { margin-left: 9px; }
.card-foot {
  position: relative;
  display: flex;
  justify-content: flex-end;
  gap: 8px;
  padding: 12px 20px;
  background: #f7f7f7;
  border-radius: 0 0 4px 4px;
}

/* Red callouts drawn over the page */
.mark { position: absolute; border: 5px solid #ed1c24; pointer-events: none; }
.mark-item { inset: 1px -7px auto -11px; height: 60px; }
.mark-actions { inset: -13px -6px -6px auto; width: 271px; }
.mark-actions span {
  position: absolute;
  right: 294px;
  top: 17px;
  color: #ed1c24;
  font: 700 32px/40px "Noto Sans", sans-serif;
}
```
